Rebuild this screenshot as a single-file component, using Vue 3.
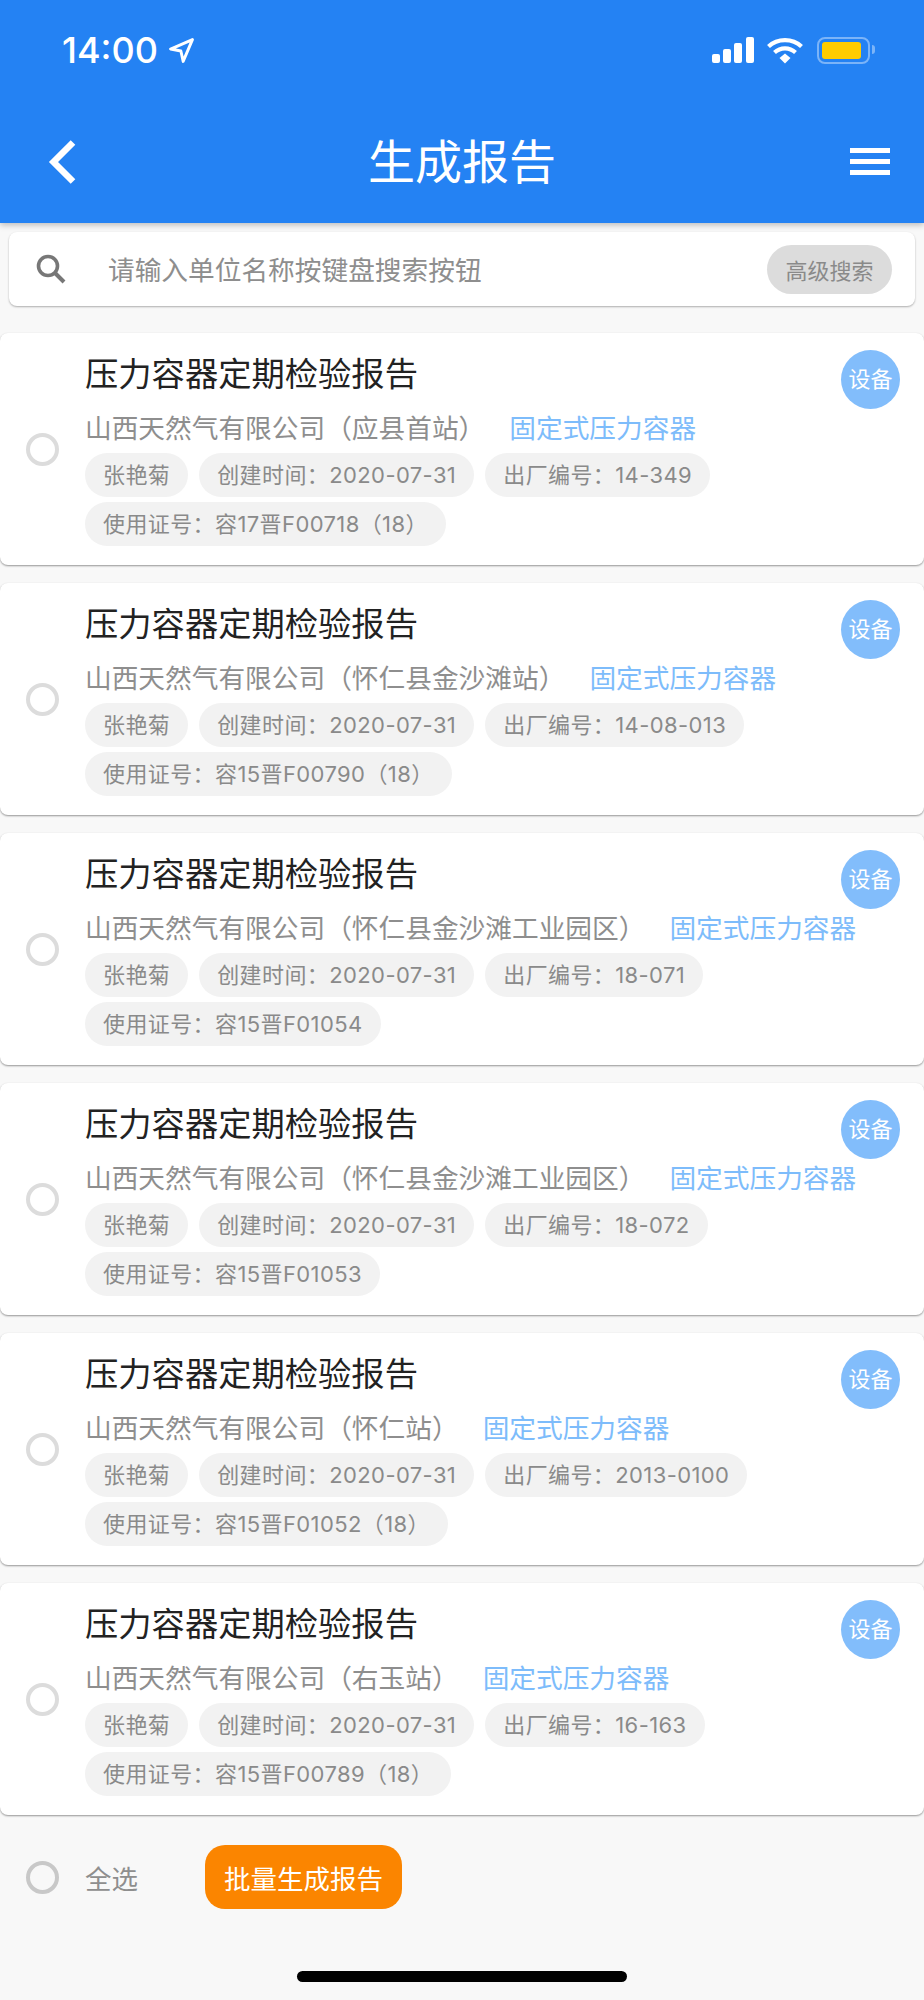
<script setup>
const reports = [
  { company: '山西天然气有限公司（应县首站）', serial: '14-349', cert: '容17晋F00718（18）' },
  { company: '山西天然气有限公司（怀仁县金沙滩站）', serial: '14-08-013', cert: '容15晋F00790（18）' },
  { company: '山西天然气有限公司（怀仁县金沙滩工业园区）', serial: '18-071', cert: '容15晋F01054' },
  { company: '山西天然气有限公司（怀仁县金沙滩工业园区）', serial: '18-072', cert: '容15晋F01053' },
  { company: '山西天然气有限公司（怀仁站）', serial: '2013-0100', cert: '容15晋F01052（18）' },
  { company: '山西天然气有限公司（右玉站）', serial: '16-163', cert: '容15晋F00789（18）' }
]
</script>

<template>
  <div class="page">
    <header class="app-header">
      <div class="status-bar">
        <div class="status-left">
          <span class="clock">14:00</span>
          <svg class="loc" width="25" height="25" viewBox="0 0 24 24">
            <path d="M22.5 1.500 1.500 10.600l9.900 1.900 2.200 10z" fill="none" stroke="#fff" stroke-width="2.800" stroke-linejoin="round" />
          </svg>
        </div>
        <div class="status-right">
          <svg width="42" height="26" viewBox="0 0 42 26">
            <rect x="0" y="17" width="8" height="9" rx="2" fill="#fff" />
            <rect x="11" y="12" width="8" height="14" rx="2" fill="#fff" />
            <rect x="22" y="6" width="8" height="20" rx="2" fill="#fff" />
            <rect x="34" y="0" width="8" height="26" rx="2" fill="#fff" />
          </svg>
          <svg class="wifi" width="36" height="27" viewBox="0 0 36 27">
            <path d="M1.500 9.500C10.500 1 25.500 1 34.500 9.500" fill="none" stroke="#fff" stroke-width="4.200" />
            <path d="M7.500 15.500C13.500 10 22.500 10 28.500 15.500" fill="none" stroke="#fff" stroke-width="4.200" />
            <path d="M12.500 21 18 16.500 23.500 21 18 26.500z" fill="#fff" />
          </svg>
          <div class="battery">
            <div class="battery-fill"></div>
            <div class="battery-cap"></div>
          </div>
        </div>
      </div>
      <div class="nav-bar">
        <svg class="back" width="28" height="44" viewBox="0 0 28 44">
          <path d="M25 2.500 5.500 22 25 41.500" fill="none" stroke="#fff" stroke-width="6.500" />
        </svg>
        <h1 class="nav-title">生成报告</h1>
        <div class="menu">
          <span></span>
          <span></span>
          <span></span>
        </div>
      </div>
    </header>

    <div class="search">
      <svg class="search-icon" width="30" height="30" viewBox="0 0 30 30">
        <circle cx="12" cy="12" r="9.500" fill="none" stroke="#777" stroke-width="3.600" />
        <path d="m19 19 9 9" fill="none" stroke="#777" stroke-width="4" />
      </svg>
      <span class="placeholder">请输入单位名称按键盘搜索按钮</span>
      <button class="adv-btn" type="button">高级搜索</button>
    </div>

    <section class="list">
      <article v-for="(r, i) in reports" :key="i" class="card">
        <span class="radio"></span>
        <div class="card-body">
          <div class="card-title">压力容器定期检验报告</div>
          <div class="card-company">
            <span>{{ r.company }}</span>
            <span class="card-type">固定式压力容器</span>
          </div>
          <div class="chips">
            <span class="chip">张艳菊</span>
            <span class="chip">创建时间：2020-07-31</span>
            <span class="chip">出厂编号：{{ r.serial }}</span>
            <span class="chip">使用证号：{{ r.cert }}</span>
          </div>
        </div>
        <span class="badge">设备</span>
      </article>
    </section>

    <footer class="footer">
      <span class="radio radio--dark"></span>
      <span class="select-all">全选</span>
      <button class="batch-btn" type="button">批量生成报告</button>
    </footer>

    <div class="home-bar"></div>
  </div>
</template>

<style>
body {
  background: #f8f8f8;
}
</style>

<style scoped>
.page {
  position: relative;
  width: 924px;
  height: 2000px;
  overflow: hidden;
  background: #f8f8f8;
  font-family: Inter, "Noto Sans CJK SC", sans-serif;
}

.app-header {
  height: 223px;
  background: #2482f3;
  box-shadow: 0 2px 6px rgba(0, 0, 0, 0.25);
}

.status-bar {
  height: 100px;
  display: flex;
  justify-content: space-between;
  padding: 28px 54px 0 62px;
  box-sizing: border-box;
}

.status-left {
  display: flex;
  align-items: flex-start;
}

.clock {
  color: #fff;
  font-size: 36px;
  line-height: 44px;
  font-weight: 500;
}

.loc {
  margin: 10px 0 0 11px;
}

.status-right {
  display: flex;
  align-items: flex-start;
  padding-top: 9px;
}

.wifi {
  margin-left: 13px;
}

.battery {
  position: relative;
  width: 53px;
  height: 27px;
  margin-left: 14px;
  box-sizing: border-box;
  border: 2px solid rgba(255, 255, 255, 0.4);
  border-radius: 8px;
  padding: 3px;
}

.battery-fill {
  width: 39px;
  height: 17px;
  background: #ffcc00;
  border-radius: 3px;
}

.battery-cap {
  position: absolute;
  right: -7px;
  top: 6px;
  width: 3px;
  height: 9px;
  background: rgba(255, 255, 255, 0.4);
  border-radius: 0 3px 3px 0;
}

.nav-bar {
  height: 123px;
  display: flex;
  align-items: center;
  justify-content: space-between;
  padding: 0 34px 0 48px;
}

.nav-title {
  margin: 0 0 0 -2px;
  color: #fff;
  font-size: 47px;
  line-height: 60px;
  font-weight: 400;
}

.menu {
  width: 40px;
  display: flex;
  flex-direction: column;
  gap: 6px;
}

.menu span {
  height: 5px;
  background: #fff;
}

.search {
  display: flex;
  align-items: center;
  height: 74px;
  margin: 9px 9px 27px;
  padding: 0 23px 0 27px;
  box-sizing: border-box;
  background: #fff;
  border-radius: 8px;
  box-shadow: 0 1px 2px rgba(0, 0, 0, 0.3);
}

.search-icon {
  flex: none;
}

.placeholder {
  margin-left: 42px;
  margin-top: -2px;
  flex: 1;
  font-size: 26.700px;
  color: #8e8e8e;
}

.adv-btn {
  width: 125px;
  height: 49px;
  border: none;
  border-radius: 25px;
  background: #dcdcdc;
  color: #8a8a8a;
  font-family: inherit;
  font-size: 22px;
  padding: 0;
}

.list {
  display: flex;
  flex-direction: column;
  gap: 18px;
}

.card {
  position: relative;
  display: flex;
  align-items: center;
  background: #fff;
  border-radius: 8px;
  box-shadow: 0 1px 2px rgba(0, 0, 0, 0.4);
}

.radio {
  flex: none;
  width: 33px;
  height: 33px;
  margin-left: 26px;
  box-sizing: border-box;
  border: 4px solid #dcdcdc;
  border-radius: 50%;
}

.radio--dark {
  border-color: #c8c8c8;
}

.card-body {
  flex: 1;
  min-width: 0;
  margin-left: 26px;
  padding: 21px 0 19px;
}

.card-title {
  font-size: 33.300px;
  line-height: 40px;
  color: #222;
}

.card-company {
  display: flex;
  gap: 24px;
  margin-top: 16px;
  padding-bottom: 1px;
  font-size: 26.700px;
  line-height: 36px;
  color: #8e8e8e;
}

.card-type {
  color: #7dbcfb;
}

.chips {
  display: flex;
  flex-wrap: wrap;
  gap: 5px 11px;
  margin-top: 6px;
}

.chip {
  height: 44px;
  padding: 0 18px;
  line-height: 45px;
  border-radius: 22px;
  background: #f2f2f2;
  font-size: 22px;
  letter-spacing: 0.4px;
  color: #8a8a8a;
}

.badge {
  position: absolute;
  top: 17px;
  right: 24px;
  width: 59px;
  height: 59px;
  border-radius: 50%;
  background: #82bdfb;
  color: #fff;
  font-size: 22px;
  line-height: 59px;
  text-align: center;
}

.footer {
  display: flex;
  align-items: center;
  margin-top: 30px;
}

.select-all {
  margin-left: 26px;
  font-size: 26.500px;
  color: #8e8e8e;
}

.batch-btn {
  width: 197px;
  height: 64px;
  margin-left: 67px;
  padding: 0;
  border: none;
  border-radius: 20px;
  background: #fb8500;
  color: #fff;
  font-family: inherit;
  font-size: 26.500px;
}

.home-bar {
  position: absolute;
  left: 297px;
  bottom: 18px;
  width: 330px;
  height: 11px;
  border-radius: 6px;
  background: #000;
}
</style>
